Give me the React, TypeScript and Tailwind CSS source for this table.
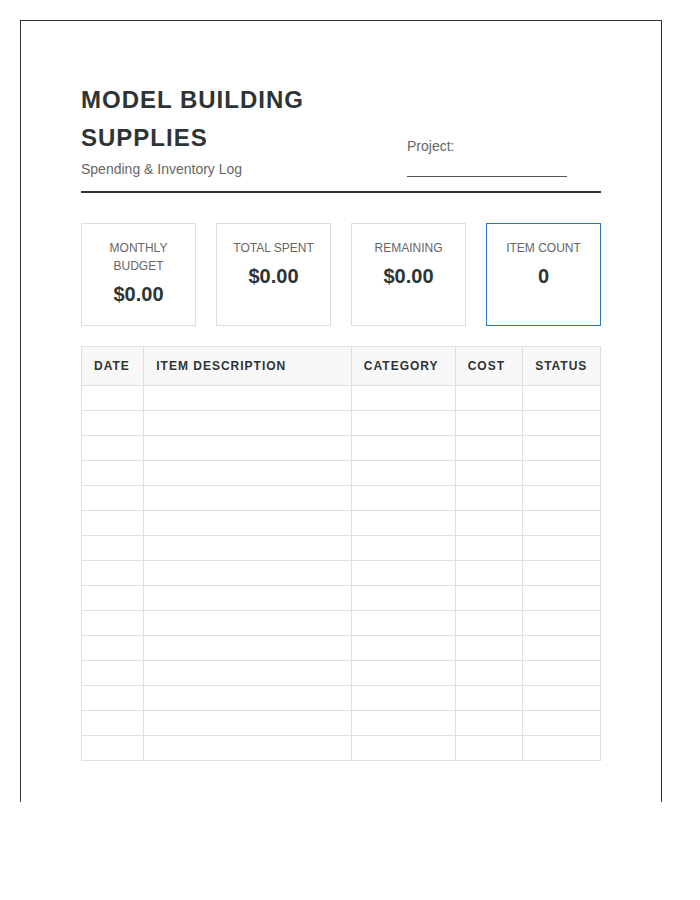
const stats = [
  { label: "Monthly Budget", value: "$0.00" },
  { label: "Total Spent", value: "$0.00" },
  { label: "Remaining", value: "$0.00" },
  { label: "Item Count", value: "0", highlight: true },
];

const columns = [
  { name: "Date", width: "w-[12%]" },
  { name: "Item Description", width: "w-[40%]" },
  { name: "Category", width: "w-[20%]" },
  { name: "Cost", width: "w-[13%]" },
  { name: "Status", width: "w-[15%]" },
];

const rows = Array.from({ length: 15 }, (_, i) => i);

export default function App() {
  return (
    <div className="bg-white w-[700px] h-[900px] pt-5 pl-5" style={{ fontFamily: '"Liberation Sans", Arial, sans-serif' }}>
      <div className="w-[642px] h-[782px] border-t border-l border-r border-[#333] px-[60px] pt-[60px]">
        {/* header */}
        <div className="flex justify-between items-end border-b-2 border-[#2d3436] pb-[13px]">
          <div className="w-[300px]">
            <h1 className="text-[24px] leading-[38px] font-bold tracking-[1px] text-[#2d3436] uppercase">
              Model Building Supplies
            </h1>
            <p className="text-[14px] leading-[18px] text-[#666] mt-[3px]">Spending &amp; Inventory Log</p>
          </div>
          <div className="w-[194px] pb-[1px]">
            <div className="text-[14px] leading-[18px] text-[#666]">Project:</div>
            <div className="w-[160px] border-b border-[#555] mt-[21px]"></div>
          </div>
        </div>

        {/* stats */}
        <div className="grid grid-cols-4 gap-5 mt-[30px]">
          {stats.map((s) => (
            <div
              key={s.label}
              className={`border ${s.highlight ? "border-[#2b78c2]" : "border-[#ddd]"} px-[15px] pt-[15px] pb-[19px] text-center`}
            >
              <div className="text-[12px] leading-[18px] uppercase text-[#666]">{s.label}</div>
              <div className="text-[20px] leading-[24px] font-bold text-[#2d3436] mt-[7px]">{s.value}</div>
            </div>
          ))}
        </div>

        {/* table */}
        <table className="w-full mt-[20px] border-collapse table-fixed">
          <thead>
            <tr className="bg-[#f8f8f8]">
              {columns.map((c) => (
                <th
                  key={c.name}
                  className={`${c.width} h-[39px] border border-[#e0e0e0] px-3 text-left text-[12px] font-bold uppercase tracking-[1px] text-[#2d3436]`}
                >
                  {c.name}
                </th>
              ))}
            </tr>
          </thead>
          <tbody>
            {rows.map((r) => (
              <tr key={r}>
                {columns.map((c) => (
                  <td key={c.name} className="h-[25px] border border-[#e0e0e0]"></td>
                ))}
              </tr>
            ))}
          </tbody>
        </table>
      </div>
    </div>
  );
}
